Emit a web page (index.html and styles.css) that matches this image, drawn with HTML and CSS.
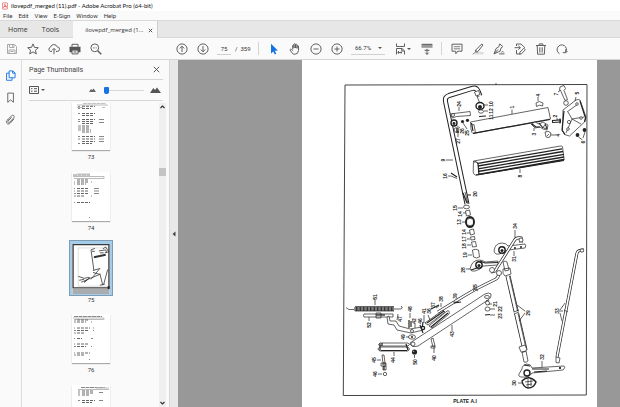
FILE: index.html
```html
<!DOCTYPE html>
<html lang="en">
<head>
<meta charset="utf-8">
<title>ilovepdf_merged (11).pdf - Adobe Acrobat Pro (64-bit)</title>
<link rel="stylesheet" href="styles.css">
</head>
<body>
<header class="titlebar">
  <svg class="app-logo" viewBox="0 0 7 8" aria-hidden="true"><rect x=".4" y=".4" width="6.200" height="7.200" rx="1" fill="#fff" stroke="#d8494a" stroke-width=".8"/><path d="M1.500 6c1.200-.8 2-2.600 1.900-4M3.400 2c.1 1.600 1 2.700 2.300 3.100M1.700 5.300c1.200-.7 2.600-.9 4-.3" fill="none" stroke="#e02b2b" stroke-width=".7"/></svg>
  <span>ilovepdf_merged (11).pdf - Adobe Acrobat Pro (64-bit)</span>
</header>
<nav class="menubar" aria-label="Menu">
  <button>File</button><button>Edit</button><button>View</button><button>E-Sign</button><button>Window</button><button>Help</button>
</nav>
<nav class="tabs" aria-label="Tabs">
  <button class="tab tab-home">Home</button>
  <button class="tab tab-tools">Tools</button>
  <div class="tab-doc"><button class="tab-name">ilovepdf_merged (1...</button><button class="tab-close" aria-label="Close tab"><svg viewBox="0 0 5 5"><path d="M.8.8l3.400 3.400M4.200.8L.8 4.200" stroke="#444" stroke-width=".9"/></svg></button></div>
</nav>
<div class="toolbar">
  <div class="group group-file">
    <button aria-label="Save"><svg class="icon faded" viewBox="0 0 12 12"><path d="M1.500 1.500h7l2 2v7h-9zM3.500 1.500v3h4.500v-3M3 10.500V7h6v3.500M6.500 2.200v1.500M4.500 8.500h3"/></svg></button>
    <button aria-label="Star"><svg class="icon" viewBox="0 0 12 12"><path d="M6 .9l1.500 3.500 3.800.3-2.900 2.500.9 3.700L6 8.900l-3.300 2 .9-3.700L.7 4.700l3.800-.3z"/></svg></button>
    <button aria-label="Upload"><svg class="icon" viewBox="0 0 12 12"><path d="M4 8.500H2.800a2.200 2.200 0 0 1-.3-4.300A3.500 3.500 0 0 1 9.200 3.900a2.300 2.300 0 0 1 0 4.600H8M6 11.200V5.600M4.100 7.300L6 5.400l1.900 1.900"/></svg></button>
    <button aria-label="Print"><svg class="icon" viewBox="0 0 12 12"><path class="solid" d="M.5 3.800h11v5.400H9V7H3v2.200H.5z"/><path d="M3 3.800V1.300h6v2.500M3 7.200h6v3.700H3zM4.500 9h3"/></svg></button>
    <button aria-label="Find"><svg class="icon" viewBox="0 0 12 12"><circle cx="4.800" cy="4.800" r="3.900"/><path d="M7.700 7.700l3.600 3.600" stroke-width="1.500"/><path d="M2.900 4.900h3.900" stroke-dasharray=".8 .7"/></svg></button>
  </div>
  <div class="group">
    <button aria-label="Previous page"><svg class="icon" viewBox="0 0 12 12"><circle cx="6" cy="6" r="5.100"/><path d="M6 9V3.300M3.800 5.400L6 3.200l2.200 2.200"/></svg></button>
    <button aria-label="Next page"><svg class="icon" viewBox="0 0 12 12"><circle cx="6" cy="6" r="5.100"/><path d="M6 3v5.700M3.800 6.600L6 8.800l2.200-2.200"/></svg></button>
  </div>
  <input class="page-field" aria-label="Page number" value="75">
  <span class="page-total">/&nbsp; 359</span>
  <span class="divider"></span>
  <div class="group">
    <button aria-label="Select"><svg class="icon" viewBox="0 0 12 12"><path d="M3 .8v9.600l2.300-2 1.500 3.100 1.500-.7-1.500-3 3-.2z" class="blue"/></svg></button>
    <button aria-label="Hand"><svg class="icon" viewBox="0 0 12 12"><path d="M3.700 6.500V2.300q.7-1 1.300 0V5.200M5 5V1.200q.8-1 1.500 0V5M6.500 5V1.700q.8-.9 1.500 0V5.300M8 5.400V3q.8-.8 1.500 0v4.500q-.2 3.700-3.700 3.800-1.800 0-2.800-1.500L.9 6.800q.6-1.200 1.700-.2l1.100 1"/></svg></button>
    <button aria-label="Zoom out"><svg class="icon" viewBox="0 0 12 12"><circle cx="6" cy="6" r="5.100"/><path d="M3.500 6h5"/></svg></button>
    <button aria-label="Zoom in"><svg class="icon" viewBox="0 0 12 12"><circle cx="6" cy="6" r="5.100"/><path d="M3.500 6h5M6 3.500v5"/></svg></button>
  </div>
  <div class="zoom-field caret"><select aria-label="Zoom level"><option>66.7%</option></select></div>
  <div class="group group-fit">
    <button class="caret" aria-label="Fit page"><svg class="icon" viewBox="0 0 12 12"><path d="M1.500.5v3h8v-3M1.500 11.500V5.500h5.500l2.500 2.300v3.700M6.800 5.500V8h2.500M3.500 8v2.800M2.500 9.500h4.500M5.800 8.500l1.200 1-1.200 1"/></svg></button>
    <button aria-label="Read mode"><svg class="icon" viewBox="0 0 12 12"><path class="solid soft" d="M.5 1h11v3.800H.5z"/><path d="M6 5.800v5.700M3.500 7.300h5M4.300 9.700L6 11.400l1.700-1.700M.8 1.300h10.400"/></svg></button>
  </div>
  <span class="divider"></span>
  <div class="group">
    <button aria-label="Comment"><svg class="icon" viewBox="0 0 12 12"><path d="M1 1.200h10v7H6.800L4.800 10.800V8.200H1z"/><path d="M2.800 3.700h6.400M2.800 5.800h6.400" stroke-width=".8"/></svg></button>
    <button aria-label="Highlight"><svg class="icon" viewBox="0 0 12 12"><path class="solid pale" d="M5 9h6.500v2.500H2z"/><path d="M9.700 1l1.300 1-5.300 6.800-1.900.4-.4-1.800zM3.400 7.400l2.300 1.400M3 9.300l-2 2"/></svg></button>
    <button aria-label="Sign"><svg class="icon" viewBox="0 0 12 12"><path d="M6.800.9l3 2.700-1.600 1.100-1.200 3.500L1 10.900l2-5.300 2.800-1.900zM1.300 10.500L5 6.500M6.200 10.900h5.300M8.300 9.500l1.200-1.300 1.300 1.300"/></svg></button>
    <button aria-label="Export"><svg class="icon" viewBox="0 0 12 12"><path d="M2.500 3V1h4.500l3.500 3.300v1M.6 4.700h5.600M4.400 2.800l2 1.900-2 1.900M2.500 7v4h4M9.800 5.300l1.500 1.500-3.800 4-1.900.3.300-1.900z"/></svg></button>
    <button aria-label="Delete"><svg class="icon" viewBox="0 0 12 12"><path d="M1 2.500h10M4.200 2.300V.9h3.600v1.400M2.200 2.700l.4 8.500h6.800l.4-8.500"/><path d="M4.500 4.300v5.300M6 4.300v5.300M7.500 4.300v5.300" stroke-width=".7"/></svg></button>
    <button aria-label="Rotate"><svg class="icon" viewBox="0 0 12 12"><path d="M3.500 10.700A4.700 4.700 0 1 1 9.700 9.200M9.700 6.300v3.500l-2.900-.2M9.900 9.700l1.700-1.800"/></svg></button>
  </div>
</div>
<main class="workspace">
  <nav class="rail" aria-label="Panels">
    <button aria-label="Page thumbnails"><svg class="icon active" viewBox="0 0 12 12"><path d="M4.500 1h4l2.500 2.300v5.200H4.500zM8.300 1v2.500H11M4.500 3.500H1.700v7.700h6V8.500"/></svg></button>
    <button aria-label="Bookmarks"><svg class="icon" viewBox="0 0 12 12"><path d="M3 1.200h6.200v10L6.100 8.600 3 11.200z"/></svg></button>
    <button aria-label="Attachments"><svg class="icon" viewBox="0 0 12 12"><path d="M2.700 6.600l4.400-4.700c1.700-1.700 4 .4 2.500 2.200L5 9.100c-1.200 1.200-2.700-.2-1.700-1.400l3.900-4M9.900 5.200L5.800 9.900c-2.300 2.500-5.700-.1-3.700-2.600l1.300-1.500"/></svg></button>
  </nav>
  <section class="panel">
    <div class="panel-head"><h2>Page Thumbnails</h2><button aria-label="Close panel"><svg viewBox="0 0 7 7"><path d="M.8.800l5.400 5.400M6.200.8L.8 6.200" stroke="#444" stroke-width=".9"/></svg></button></div>
    <div class="panel-tools">
      <button class="options caret" aria-label="Options"><svg viewBox="0 0 10 8"><path d="M.5.500h9v7h-9zM2 2.700h1.500M5 2.700h3M2 5.200h1.500M5 5.200h3" fill="none" stroke="#555"/></svg></button>
      <svg class="hill-small" viewBox="0 0 7 4"><path d="M0 4l2-3 1.200 1L4.600.4 7 4z" fill="#666"/></svg>
      <input class="size" type="range" min="0" max="100" value="0" aria-label="Thumbnail size">
      <svg class="hill-large" viewBox="0 0 11 6"><path d="M0 6l3.300-5 1.700 2L7 .5 11 6z" fill="#555"/></svg>
    </div>
    <div class="panel-body">
      <div class="thumbs">
        <figure class="clip-top"><svg class="thumb" viewBox="0 0 38 48"><g class="scan"><path d="M11 1.500h23" stroke-dasharray="4 .5"/><path class="thin" d="M5 3.500h31M5 6h6M30 6h3"/><path class="dense" d="M10 4.800h13M10 7h9M10 12h13M10 14h11M10 18h13M10 20h12M10 22h12M10 24.500h8M10 26.500h8M10 28.500h9M10 30.500h9M10 35h13M10 37.500h13M10 40h13M10 42h10"/><path d="M6 5h2M6 7h2M6 12h2M6 18h2M6 20h2M6 24.500h3M6 26.500h3M6 28.500h3M6 35h2M6 37.500h2M6 42h2M27 18h5M27 21h5M27 35h5M27 37.500h5M27 40h5"/></g></svg><figcaption>73</figcaption></figure>
        <figure><svg class="thumb" viewBox="0 0 38 48"><g class="scan"><path d="M1 2.500h17" stroke-dasharray="4 .5"/><path class="thin" d="M1 4h31v2H2M5 1.500h13"/><path class="dense" d="M5 7.500h12M5 9.500h11M5 11.500h9M5 16h11M5 18.500h11M5 21h11M5 23.500h8M5 30h13"/><path d="M2 9.500h1M2 11.500h1M2 16h1M2 18.500h1M2 21h2M2 23.500h2M2 30h1M22 16h5M22 18.500h5M22 21h5M19 9.500h1M19 23.500h1M17 45h1"/></g></svg><figcaption>74</figcaption></figure>
        <figure class="selected"><div class="halo"><svg class="thumb" viewBox="0 0 38 51"><path d="M0 46h38v5H0z" fill="#a9adb0"/><path d="M.7.7h36.600v44H.7z" fill="#fff" stroke="#3b3b3b" stroke-width="1.400"/><path d="M6 4h30M6 4v39h30" fill="none" stroke="#aaa" stroke-width=".4"/><g fill="none" stroke="#333" stroke-width=".8"><path d="M22 27L19 6l4-1.500M20 7.500h3M27 7l7-1 1 3M31 5l3-2 3 5-4 1M28 9h4"/><path d="M22 13.500l12-2.500" stroke-width="2"/><path d="M21 27l7-2-9 11M21 29l7 2-12 5M28 30l3 12M36 26l-4 15M6 33l6 2 5-1M7 37l5-1M9 39l7-3-4 3M28 42l5-1M18 34l-6 5"/></g><path d="M36 43h2v3h-2z" fill="#222"/></svg></div><figcaption>75</figcaption></figure>
        <figure><svg class="thumb" viewBox="0 0 38 48"><g class="scan"><path d="M2 2h28" stroke-dasharray="4 .5"/><path class="thin" d="M1 3.500h31v1.500H3"/><path class="dense" d="M5 5.500h12M5 7.500h9M5 13.500h13M5 16h11M5 18.500h8M5 24h5M5 29.500h12M5 32h9M5 38.500h13M5 40.500h8"/><path d="M2 5.500h2M2 7.500h2M2 13.500h1M2 16h2M2 18.500h2M2 24h1M2 29.500h1M2 32h2M2 38.500h1M2 40.500h2M19 7.500h1M21 13.500h1M21 16h1M19 24h2M19 32h1M17 45h1"/></g></svg><figcaption>76</figcaption></figure>
        <figure><svg class="thumb" viewBox="0 0 38 48"><g class="scan"><path d="M9 2h24" stroke-dasharray="4 .5"/><path class="thin" d="M6 4h31M24 2.500h13"/><path class="dense" d="M10 5.500h12M10 7.500h12M10 9.500h7M10 15h13M10 17h10"/><path d="M6 5.500h2M6 7.500h2M6 9.500h2M6 15h2M27 7h4M27 15h4"/></g></svg></figure>
      </div>
      <div class="scrollbar" aria-hidden="true">
        <svg viewBox="0 0 7 6"><path d="M1.500 4l2-2 2 2" fill="none" stroke="#333" stroke-width="1.200"/></svg>
        <span class="scroll-thumb"></span>
        <svg class="down" viewBox="0 0 7 6"><path d="M1.500 2l2 2 2-2" fill="none" stroke="#333" stroke-width="1.200"/></svg>
      </div>
    </div>
  </section>
  <button class="splitter" aria-label="Collapse panel"><svg viewBox="0 0 4 6"><path d="M3.500.5v5L.5 3z" fill="#444"/></svg></button>
  <section class="document">
    <svg class="sheet" viewBox="302 60 295 347" role="img" aria-label="Plate A.1 exploded parts drawing">
      <path class="frame" d="M345 85L587 84.500L586.300 395L343.300 395.500Z"/>
      <path class="line" d="M496 83v2"/>
      <!-- operating rod 9 -->
      <path class="tube4" d="M480 96l-2-5q-2-4-6-2.500L449 95.500q-4.500 1.500-3.500 6L467 204"/>
      <path class="hollow3" d="M480 96l-2-5q-2-4-6-2.500L449 95.500q-4.500 1.500-3.500 6L467 204"/>
      <path class="line" d="M465 192l3 12"/>
      <!-- bushes beside the rod -->
      <path class="part" d="M474.500 92l4-1.500 1.500 4-4 1.500zM477 96l3 8"/>
      <ellipse class="part heavy" cx="480" cy="106" rx="4" ry="3.500"/><circle class="ink" cx="480" cy="107" r="2"/>
      <ellipse class="part" cx="481" cy="111.500" rx="2.500" ry="1.700"/><path class="thick" d="M479 116.500l7-.5"/>
      <path class="line" d="M484 105h4M484 111h4M459 107v4"/>
      <path class="part" d="M450 114l20-2.500.5 4-14 1-4 1.500z"/><circle class="part" cx="453" cy="115" r="1.500"/>
      <circle class="part heavy" cx="454" cy="123" r="3"/><circle class="ink" cx="454" cy="123.500" r="1.400"/>
      <circle class="part" cx="456.500" cy="130" r="2.400"/><path class="heavy line" d="M457 128v4h2"/>
      <circle class="ink" cx="462.500" cy="121.500" r="1.600"/><circle class="ink" cx="467.500" cy="120.300" r="1.600"/>
      <path class="line" d="M456 125l4 3M463 123l4 6M458 133v4"/>
      <!-- pedal 1 and pad 8 -->
      <path class="part" d="M470.500 122L548 107.500L550.500 119L473 133.500Q471.500 133 471 129Z"/>
      <path class="thick" d="M473 133.300L550 119.500M471.500 123l1.500 8"/>
      <path class="line" d="M472 125l2-.5 1.500 8.500M512 109.500v4.500"/>
      <path class="part" d="M531 124l4-2 4 2 4-2 5 3-1 5-4-1-3-2-5 1z"/><path class="thick" d="M532 124l4 3M539 123l4 5M545 124l2 5M535 127h5"/><circle class="part" cx="545" cy="127" r="1.500"/>
      <path class="part" d="M536 103q3-3 7 0l-.5 3q-3-2-6 .5zM545 132q3-2 6 1l-1 4q-2 1-4 0zM547 136l2-2"/>
      <path class="line" d="M538 97v4M551 135h5M534 128v3"/>
      <path class="part" d="M473.500 161l87-15q1.500-.5 2 1l1.700 13-87 15q-4 .5-4-3.500z"/>
      <path class="ribs" d="M478 163.300l84-14.500M478 166l85-14.500M478 168.800l86-14.500M478 171.500l86-14.500M478 174.300l86-14.800"/>
      <path class="thick" d="M474 162q3-1 4 2l1 10.500M476 175l88-14.500"/><path class="line" d="M520 169v4"/>
      <!-- mounting bracket 5 -->
      <path class="part" d="M563 110l13-10q3-1 4 0l6 17-1.500 5-15 14-5-1.500-2-4z"/>
      <path class="thick" d="M564 111l-2 19 3 4.500M580 101l5.500 17-1 4"/><path class="line" d="M567 112l11-8M568 112l4 7 12-2M572 119l-6 14M572 119l9 5"/>
      <circle class="part" cx="577" cy="104" r="1.300"/><circle class="part" cx="569" cy="122" r="1.600"/><circle class="part" cx="581" cy="118" r="1.300"/><circle class="part" cx="568" cy="129" r="1.300"/>
      <path class="part" d="M560 87l4-1.500 1.500 3-1.500 2 3.500 9-2.500 1-4-9-1.500-1.500z"/><circle class="part" cx="566" cy="103" r="2.300"/><path class="line" d="M558 92l3-2M576 97l-1 4M557 118v2h4"/>
      <path class="tube3" d="M552 121.500l9-.5"/><path class="hollow1" d="M553 121.500l7-.5"/><path class="thick" d="M560 118.500v5"/>
      <circle class="ink" cx="577.500" cy="135" r="1.900"/><circle class="ink" cx="584.500" cy="130" r="1.900"/><path class="line" d="M578.500 137l4 3M585 132l-2 6"/>
      <!-- lower end of rod 9 -->
      <path class="line" d="M446 160h7M448 176h3l6 2.500"/><path class="thick" d="M451 173l6 4M467 195h4M463 193l4 10"/>
      <ellipse class="part" cx="466.500" cy="207" rx="3" ry="1.800"/><path class="part" d="M465.500 211l4-1 1 5-4 1z"/>
      <ellipse class="part ring" cx="470" cy="222" rx="4" ry="5"/><path class="line" d="M468 219q2-1.500 4 0M468 225q2 1.500 4 0"/>
      <path class="part" d="M469.500 230l4-1 1 5-4 1zM470.500 237l4-.5.5 3-4 .5zM471.500 242l4-.5 1 5-4 .5zM472.500 250q3-1.500 6 0l1 7q-3 2-6 0z"/>
      <path class="line" d="M458 208h5M463 213h3M462 222h4M467 233h3M467 239h3M467 245h4M468 255h4M466 269h4"/>
      <!-- lever 28 and lever 31 -->
      <path class="part" d="M470 269q2-9 9-9 4 0 6 2l13-1v4l-15 1q-3 4-8 5-4 1-5-2z"/><circle class="part heavy" cx="479" cy="265" r="3.200"/><circle class="ink" cx="479" cy="265.500" r="1.500"/><path class="thick" d="M471 270l6-2M480 261l5 2 13-.5"/>
      <path class="part" d="M494 251q1-8 8-8 4 0 6 3l17-2q1.500 1.500 0 4l-17 2q-5 4-9 4-4 1-5-3z"/><circle class="part heavy" cx="502" cy="250" r="3.200"/><circle class="ink" cx="502" cy="250.500" r="1.500"/><circle class="ink" cx="515" cy="248" r="1"/><circle class="ink" cx="521" cy="247" r="1"/>
      <path class="tube3" d="M491 272l4-1 19-30q2-4 7-3v5"/><path class="hollow2" d="M491 272l4-1 19-30q2-4 7-3v5"/><circle class="part" cx="521" cy="240" r="2"/><circle class="part" cx="492" cy="270" r="2.500"/>
      <path class="line" d="M515 230v8M514 251v5"/>
      <!-- rod 35 -->
      <path class="tube3" d="M438 312l26-16 12-7 20-10q3-2 2.500-6"/><path class="hollow2" d="M438 312l26-16 12-7 20-10q3-2 2.500-6"/><circle class="part" cx="499" cy="273" r="2.500"/><path class="line" d="M473 291l2-2 3 2"/>
      <!-- shaft 29 -->
      <path class="tube5" d="M508 276l17 74"/><path class="hollow4" d="M508 276l17 74"/><path class="line" d="M509.500 276l16 70"/>
      <path class="part" d="M503 262q2-2 4 0l2 8-4 1zM503 269l7-1 1 6-6 2q-3-2-2-7zM519 347l6-2 2 5q-3 3-6 2zM522 352l4-1 2 10q-2 2-4 1z"/>
      <path class="gap" d="M514 313l5-1"/><path class="line" d="M514 312l5-2M514 314l5-2M517 305l8 6M519 321l6-8"/>
      <!-- rod 33 -->
      <path class="tube3" d="M557 357l20-104q.5-3 7-3"/><path class="hollow2" d="M557 357l20-104q.5-3 7-3"/><circle class="part" cx="582" cy="250.500" r="1.700"/><path class="part" d="M556 357l4 1-1 5-3-.5z"/><path class="line" d="M563 311l-4 0M560 310l5-7M560 313l2 8M564 310l4 2"/>
      <!-- lever 32 and cap 30 -->
      <path class="part" d="M519 374l3-5q0-4 5-5 4 0 5 4l32-2q2 1.500-1 4l-31 3q-3 5-10 4-4 0-3-3z"/><circle class="part heavy" cx="527" cy="373" r="3"/><path class="thick" d="M532 369h17M534 372l13-1M560 367v2M524 365l6 1"/><circle class="ink" cx="560" cy="368" r="1"/><path class="line" d="M542 361v6M518 383h4"/>
      <path class="part heavy" d="M522 381q7-7 14 1-2 6-8 6-5-1-6-7z"/><path class="line" d="M525 382l8-1M526 385l6-1M528 379v8M531 379v7"/>
      <!-- spring 51 and pin 52 -->
      <path class="line" d="M354 309.500h-5q-2-1-3-2M394 309h7q2-1 1-2l-1-1"/><path class="spring" d="M354.500 309h39.500"/><path class="line" d="M355 306.500h39M355 311h39M375 299v6"/>
      <path class="part" d="M364 314h29v3h-29q-1-1 0-3zM376 313h5v5h-5z"/><path class="thick" d="M376 315h9"/><path class="line" d="M369 317v4"/>
      <!-- relay lever 47 -->
      <path class="part" d="M389 316l1 5h6l3 5 11 3 12-2 1 3-12 3-14-3-3-5-6-1-1-7z"/><circle class="part" cx="412" cy="331" r="1.500"/>
      <path class="thick" d="M409 320v8M411 321v6M420 325l3 8M423 322l-1 7"/><path class="line" d="M398 314l-1 6M410 313v5M415 323v5M424 315v8"/>
      <!-- arm 43 -->
      <path class="part" d="M410 343l75-49q4-2 6 0 1 4-3 6l-70 46q-7 2-8-3z"/><circle class="part" cx="413" cy="344" r="2"/><ellipse class="part" cx="487" cy="297" rx="2.500" ry="1.500"/><path class="line" d="M452 325v6"/>
      <!-- linkage 36-38 -->
      <path class="part" d="M429 326l18-15q3-1 2 3l-17 14zM425 323l18-13 2 2-17 13z"/><path class="thick" d="M427 323l17-12M431 327l17-14M431 309l8-4"/><path class="line" d="M428 315l2 5M441 303v4M436 308l3-2M453 302h6"/><path class="thick" d="M454 303l7-1"/>
      <circle class="part heavy" cx="423" cy="328" r="1.600"/><ellipse class="part" cx="412" cy="337" rx="3.500" ry="2.200"/><circle class="ink" cx="412" cy="337" r="1"/><path class="line" d="M406 337h3"/>
      <!-- clamp 44 -->
      <path class="part" d="M380 343h28q3 1 0 3h-28q-3-1 0-3zM380 347h28q3 2 0 4h-28q-4-2 0-4z"/><path class="thick" d="M380 343.500v7M382 343v3M406 344l2 6M381 350.500h26"/><path class="line" d="M394 352v4"/>
      <path class="part" d="M382 355h2l1 8h-2zM381 363h5v3h-5zM383 366h3v4h-3z"/><path class="thick" d="M382 364h4M384 366v4"/><circle class="part" cx="385" cy="374" r="1.700"/><path class="line" d="M377 360h4M378 374h4"/>
      <circle class="ink" cx="414.500" cy="352" r="2.600"/><circle class="part" cx="413.500" cy="351.500" r=".8"/><path class="line" d="M414.500 355v3"/>
      <path class="part" d="M431 339l2-1 2 8-2 1zM431 346h4v2h-4z"/><path class="line" d="M434 348v5"/>
      <!-- fastenings 21-23 -->
      <path class="thick" d="M486 301h3M486 304h4"/><ellipse class="part" cx="487.500" cy="303" rx="2" ry="2"/><ellipse class="part" cx="487.500" cy="309" rx="2.500" ry="2"/><path class="thick" d="M485 315l5-.5"/><path class="line" d="M490 304h2M490 309h5M490 315h5"/>
      <g class="callouts">
        <text transform="translate(461 104) rotate(-90)">24</text><text transform="translate(493 104) rotate(-90)">10</text><text transform="translate(493 111) rotate(-90)">12</text><text transform="translate(493 117) rotate(-90)">11</text>
        <text transform="translate(514 107) rotate(-90)">1</text><text transform="translate(540 95) rotate(-90)">4</text><text transform="translate(558 94) rotate(-90)">7</text><text transform="translate(579 93) rotate(-90)">5</text><text transform="translate(557 116) rotate(-90)">2</text><text transform="translate(536 134) rotate(-90)">3</text><text transform="translate(560 135) rotate(-90)">4</text><text transform="translate(585 142) rotate(-90)">6</text>
        <text transform="translate(464 131) rotate(-90)">26</text><text transform="translate(469 133) rotate(-90)">25</text><text transform="translate(460 141) rotate(-90)">27</text><text transform="translate(445 160) rotate(-90)">9</text><text transform="translate(447 176) rotate(-90)">16</text><text transform="translate(522 176) rotate(-90)">8</text><text transform="translate(477 194) rotate(-90)">20</text>
        <text transform="translate(457 208) rotate(-90)">15</text><text transform="translate(462 214) rotate(-90)">14</text><text transform="translate(461 222) rotate(-90)">13</text><text transform="translate(466 232) rotate(-90)">14</text><text transform="translate(466 239) rotate(-90)">17</text><text transform="translate(466 246) rotate(-90)">18</text><text transform="translate(467 255) rotate(-90)">19</text><text transform="translate(465 270) rotate(-90)">28</text><text transform="translate(517 226) rotate(-90)">34</text><text transform="translate(516 259) rotate(-90)">31</text><text transform="translate(477 287) rotate(-90)">35</text>
        <text transform="translate(377 297) rotate(-90)">51</text><text transform="translate(371 325) rotate(-90)">52</text><text transform="translate(402 319) rotate(-90)">47</text><text transform="translate(412 309) rotate(-90)">48</text><text transform="translate(416 321) rotate(-90)">42</text><text transform="translate(422 321) rotate(-90)">46</text><text transform="translate(405 337) rotate(-90)">49</text><text transform="translate(426 311) rotate(-90)">41</text><text transform="translate(431 311) rotate(-90)">36</text><text transform="translate(435 305) rotate(-90)">37</text><text transform="translate(443 299) rotate(-90)">38</text><text transform="translate(457 296) rotate(-90)">39</text><text transform="translate(454 334) rotate(-90)">43</text><text transform="translate(436 358) rotate(-90)">40</text><text transform="translate(417 362) rotate(-90)">50</text><text transform="translate(395 360) rotate(-90)">44</text><text transform="translate(376 360) rotate(-90)">45</text><text transform="translate(377 374) rotate(-90)">46</text>
        <text transform="translate(497 304) rotate(-90)">21</text><text transform="translate(502 309) rotate(-90)">22</text><text transform="translate(502 316) rotate(-90)">23</text><text transform="translate(530 313) rotate(-90)">29</text><text transform="translate(559 311) rotate(-90)">33</text><text transform="translate(544 357) rotate(-90)">32</text><text transform="translate(516 383) rotate(-90)">30</text>
      </g>
      <text class="plate" x="465" y="403">PLATE A.I</text>
    </svg>
  </section>
</main>
</body>
</html>
```
FILE: styles.css
```css
* { box-sizing: border-box; }
body {
  margin: 0;
  height: 100vh;
  display: flex;
  flex-direction: column;
  overflow: hidden;
  background: #fafafa;
  color: #333;
  font-family: Roboto, "Open Sans", sans-serif;
  font-size: 6px;
  line-height: 8px;
}
button, input, select {
  margin: 0;
  padding: 0;
  border: 0;
  background: none;
  color: inherit;
  font: inherit;
}
svg { display: block; }

.titlebar { display: flex; align-items: center; gap: 3px; height: 11px; padding-left: 2px; background: #fff; color: #111; font-family: Lato, sans-serif; }
.app-logo { width: 6px; height: 8px; }
.menubar { display: flex; align-items: center; gap: 6px; height: 9px; padding-left: 3px; }

.tabs { display: flex; height: 18px; background: #e7e7e7; border-top: 1px solid #d8d8d8; border-bottom: 1px solid #d8d8d8; font-family: "Open Sans", sans-serif; font-size: 7px; }
.tab { padding-top: 1px; }
.tab-home { padding-left: 8px; }
.tab-tools { padding-left: 14px; }
.tab-doc { display: flex; align-items: center; gap: 5px; margin: 0 0 -1px 14px; padding: 1px 4px 0 12px; background: #fafafa; border-right: 1px solid #d0d0d0; font-size: 6px; }
.tab-close svg { width: 5px; height: 5px; }

.toolbar { display: flex; align-items: center; height: 22px; padding-left: 1px; border-bottom: 1px solid #d6d6d6; }
.group { display: flex; }
.group-file { margin-right: 65px; }
.group button { display: grid; place-items: center; width: 21px; height: 20px; }
.icon { width: 12px; height: 12px; fill: none; stroke: #606060; stroke-width: 1; stroke-linejoin: round; }
.icon.faded { stroke: #aaa; }
.icon.active { stroke: #1473e6; }
.icon .solid { fill: #555; stroke: none; }
.icon .soft { fill: #999; }
.icon .pale { fill: #ddd; }
.icon .blue { fill: #1473e6; stroke: none; }
.page-field { width: 14px; height: 12px; margin-left: 4px; border-bottom: 1px solid #d0d0d0; text-align: center; }
.page-total { width: 23px; margin-left: 4px; }
.divider { width: 1px; height: 13px; background: #d4d4d4; }
.toolbar .divider + .group { margin-left: 4px; }
.caret { position: relative; }
.caret::after { content: ""; border: 2px solid transparent; border-top-color: #555; border-bottom: 0; position: absolute; right: 3px; top: 50%; margin-top: -1px; }
.zoom-field { width: 34px; height: 12px; margin-left: 4px; border-bottom: 1px solid #d0d0d0; }
.zoom-field select { appearance: none; width: 100%; height: 11px; padding-left: 4px; }
.group-fit { gap: 5px; margin: 0 4px 0 5px; }
.group-fit .caret::after { right: 0; }

.workspace { flex: 1; display: flex; min-height: 0; }
.rail { display: flex; flex-direction: column; align-items: center; gap: 11px; width: 21px; padding-top: 10px; }
.rail .icon { width: 11px; height: 11px; }
.panel { flex: none; display: flex; flex-direction: column; width: 148px; border-left: 1px solid #ddd; padding-left: 7px; }
.panel-head { display: flex; align-items: center; justify-content: space-between; height: 20px; margin-right: 6px; padding-right: 3px; border-bottom: 1px solid #d6d6d6; }
.panel-head h2 { margin: 0; font-size: 7px; font-weight: 400; color: #444; }
.panel-head svg { width: 7px; height: 7px; }
.panel-tools { display: flex; align-items: center; height: 21px; margin-right: 6px; border-bottom: 1px solid #d6d6d6; }
.options { width: 17px; margin-right: 43px; }
.options svg { width: 10px; height: 8px; }
.options::after { right: 1px; }
.hill-small { width: 7px; height: 4px; }
.hill-large { width: 11px; height: 6px; }
.size { appearance: none; width: 40px; height: 8px; margin: 0 6px 0 8px; background: linear-gradient(#d8d8d8, #d8d8d8) center / 100% 1px no-repeat; }
.size::-webkit-slider-thumb { appearance: none; width: 5px; height: 7px; background: #1473e6; border-radius: 1px 1px 2px 2px; }
.panel-body { flex: 1; display: flex; min-height: 0; margin-top: 2px; overflow: hidden; }
.thumbs { flex: 1; display: flex; flex-direction: column; align-items: center; gap: 7px; min-height: 0; padding-right: 6px; overflow: hidden; }
figure { flex: none; display: flex; flex-direction: column; align-items: center; gap: 3px; height: 64px; margin: 0; }
.clip-top { margin-top: -2px; }
.thumb { width: 38px; height: 49px; background: #fff; box-shadow: 0 1px 1px #aaa; }
.scan { fill: none; stroke: #888; stroke-width: 1; }
.scan .thin { stroke: #bbb; stroke-width: 1; }
.scan .dense { stroke: #666; stroke-dasharray: 3 1; }
.selected { gap: 0; }
.halo { margin-top: -3px; padding: 3px 2px 1px; background: #a5cdea; border: 1px solid #7d9db5; }
.halo .thumb { width: 38px; height: 50px; box-shadow: none; }
.scrollbar { display: flex; flex-direction: column; width: 7px; margin-right: 3px; background: #efefef; }
.scrollbar svg { width: 7px; height: 8px; }
.scroll-thumb { height: 8px; margin-top: 57px; background: #c4c4c4; }
.scrollbar .down { margin-top: auto; }
.splitter { flex: none; display: grid; place-items: center; width: 9px; background: #e8e8e8; border-left: 1px solid #d8d8d8; }
.splitter svg { width: 4px; height: 6px; }
.document { flex: 1; min-width: 0; padding: 0 23px 0 124px; background: #989898; overflow: hidden; }

.sheet { width: 100%; background: #fff; }
.sheet path, .sheet circle, .sheet ellipse { stroke: #222; stroke-width: 0.7; fill: none; }
.sheet .frame { stroke: #444; stroke-width: 1; }
.sheet .part { fill: #fff; }
.sheet .heavy { stroke-width: 1.4; }
.sheet .ring { stroke-width: 2; }
.sheet .ink { fill: #222; stroke: none; }
.sheet .thick { stroke-width: 1.2; }
.sheet .ribs { stroke-width: 1.3; }
.sheet .tube3 { stroke-width: 3; }
.sheet .tube4 { stroke-width: 5; }
.sheet .tube5 { stroke-width: 5; }
.sheet .hollow1 { stroke: #fff; stroke-width: 1; }
.sheet .hollow2 { stroke: #fff; stroke-width: 1.6; }
.sheet .hollow3 { stroke: #fff; stroke-width: 3; }
.sheet .hollow4 { stroke: #fff; stroke-width: 3.4; }
.sheet .gap { stroke: #fff; stroke-width: 2; }
.sheet .spring { stroke-width: 4; stroke-dasharray: 1 0.4; }
.callouts { font: 700 5px "Liberation Sans", sans-serif; fill: #222; text-anchor: middle; }
.plate { font: 700 5px "Liberation Sans", sans-serif; fill: #222; text-anchor: middle; }
```
